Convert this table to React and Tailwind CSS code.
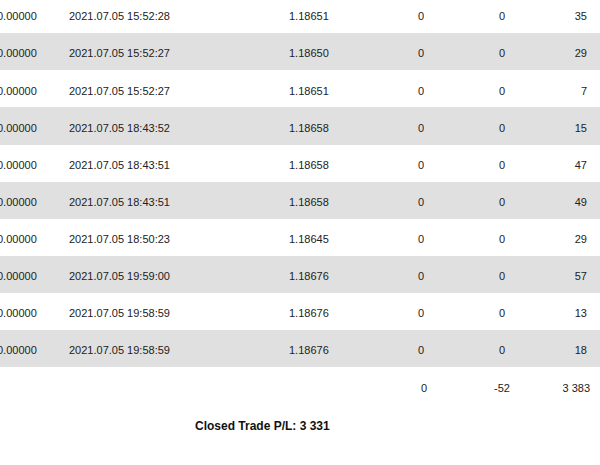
const rows = [
  ["2021.07.05 15:52:28", "1.18651", "35"],
  ["2021.07.05 15:52:27", "1.18650", "29"],
  ["2021.07.05 15:52:27", "1.18651", "7"],
  ["2021.07.05 18:43:52", "1.18658", "15"],
  ["2021.07.05 18:43:51", "1.18658", "47"],
  ["2021.07.05 18:43:51", "1.18658", "49"],
  ["2021.07.05 18:50:23", "1.18645", "29"],
  ["2021.07.05 19:59:00", "1.18676", "57"],
  ["2021.07.05 19:58:59", "1.18676", "13"],
  ["2021.07.05 19:58:59", "1.18676", "18"],
]

export default function App() {
  return (
    <div className="w-[600px] h-[465px] overflow-hidden bg-white text-[11px] text-[#222] font-['Liberation_Sans',Arial,sans-serif]">
      <div className="-mt-[4px]">
        {rows.map((r, i) => (
          <div
            key={i}
            className={`flex items-center h-[37.125px] pt-[4px] ${i % 2 === 1 ? "bg-[#e0e0e0]" : "bg-white"}`}
          >
            <div className="w-[69px] -ml-[3px] shrink-0">0.00000</div>
            <div className="w-[223px] shrink-0 pl-[3px]">{r[0]}</div>
            <div className="w-[103px] shrink-0">{r[1]}</div>
            <div className="w-[32px] shrink-0 text-right">0</div>
            <div className="w-[81px] shrink-0 text-right">0</div>
            <div className="w-[82px] shrink-0 text-right">{r[2]}</div>
          </div>
        ))}
        <div className="flex items-center h-[37.125px] pt-[4px]">
          <div className="w-[427px] shrink-0 text-right">0</div>
          <div className="w-[83px] shrink-0 text-right">-52</div>
          <div className="w-[80px] shrink-0 text-right">3 383</div>
        </div>
        <div className="pl-[195px] pt-[13px] text-[12px] font-bold text-[#111]">
          Closed Trade P/L: 3 331
        </div>
      </div>
    </div>
  )
}
